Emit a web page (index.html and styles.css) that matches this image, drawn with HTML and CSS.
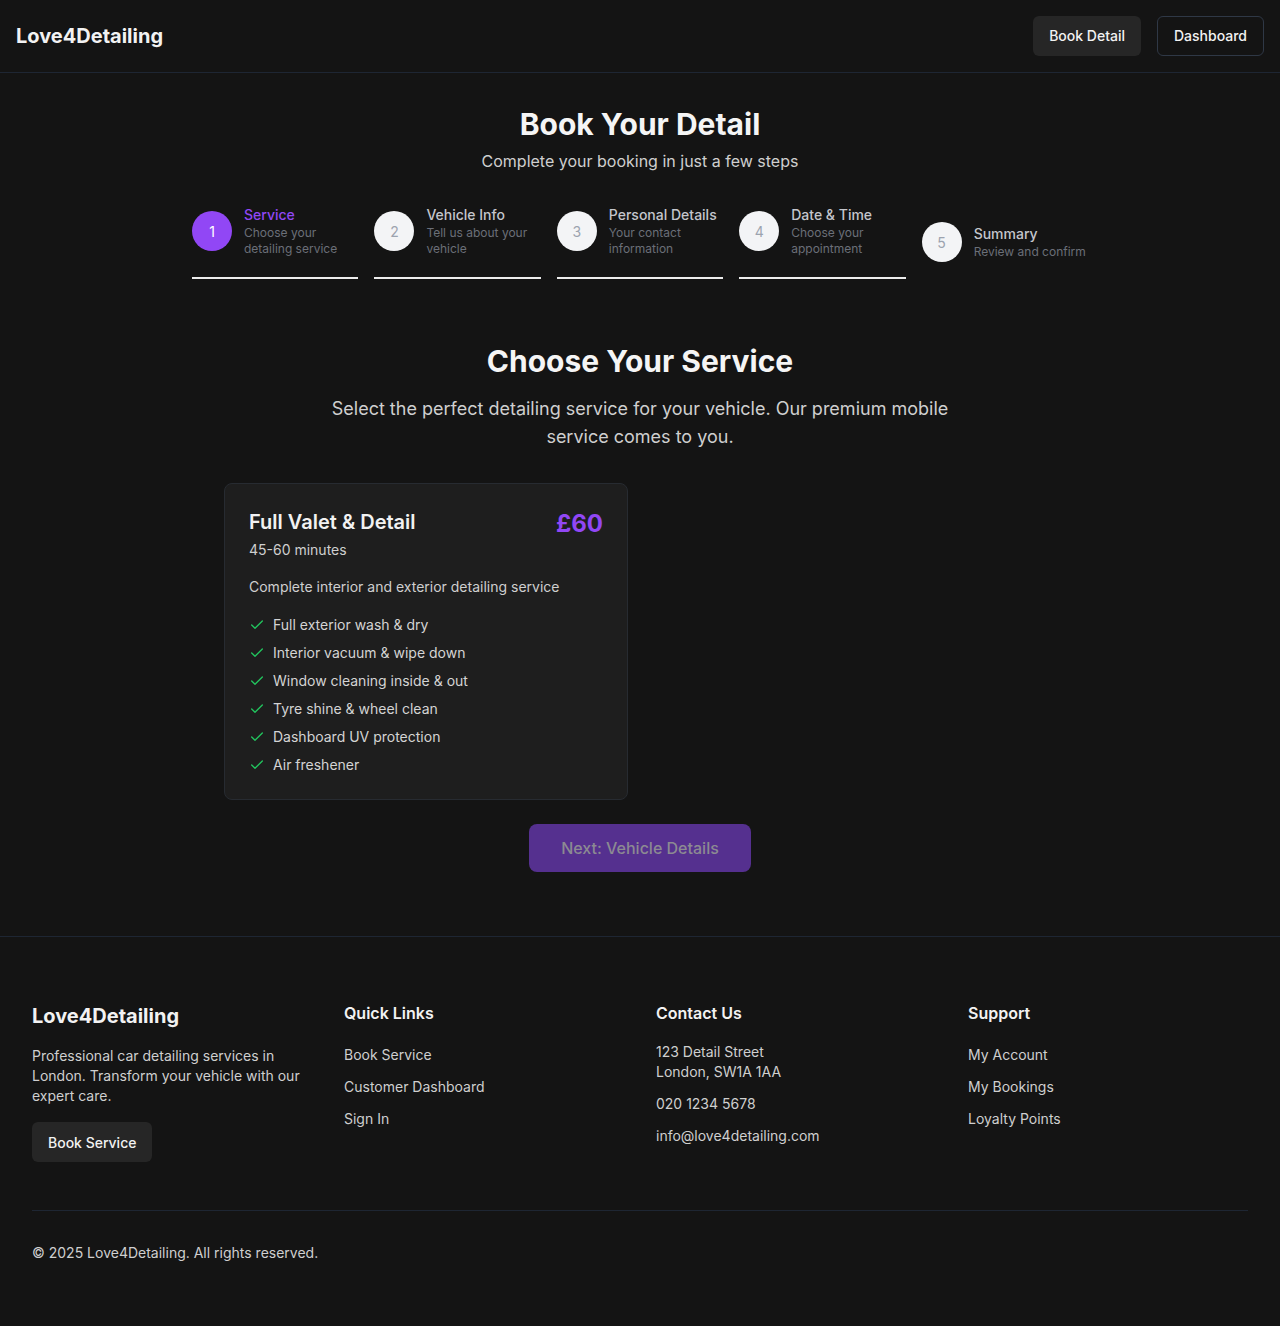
FILE: index.html
```html
<!DOCTYPE html>
<html lang="en">
<head>
<meta charset="utf-8">
<title>Love4Detailing - Book Your Detail</title>
<link rel="stylesheet" href="styles.css">
</head>
<body>
<header class="topbar">
  <div class="logo">Love4Detailing</div>
  <nav class="top-actions">
    <a class="btn btn-solid" href="#">Book Detail</a>
    <a class="btn btn-outline" href="#">Dashboard</a>
  </nav>
</header>

<main class="main">
  <h1 class="page-title">Book Your Detail</h1>
  <p class="page-sub">Complete your booking in just a few steps</p>

  <ol class="stepper">
    <li class="step active">
      <div class="step-row">
        <span class="step-num">1</span>
        <div class="step-text">
          <div class="step-title">Service</div>
          <div class="step-desc">Choose your detailing service</div>
        </div>
      </div>
      <div class="step-bar"></div>
    </li>
    <li class="step">
      <div class="step-row">
        <span class="step-num">2</span>
        <div class="step-text">
          <div class="step-title">Vehicle Info</div>
          <div class="step-desc">Tell us about your vehicle</div>
        </div>
      </div>
      <div class="step-bar"></div>
    </li>
    <li class="step">
      <div class="step-row">
        <span class="step-num">3</span>
        <div class="step-text">
          <div class="step-title">Personal Details</div>
          <div class="step-desc">Your contact information</div>
        </div>
      </div>
      <div class="step-bar"></div>
    </li>
    <li class="step">
      <div class="step-row">
        <span class="step-num">4</span>
        <div class="step-text">
          <div class="step-title">Date &amp; Time</div>
          <div class="step-desc">Choose your appointment</div>
        </div>
      </div>
      <div class="step-bar"></div>
    </li>
    <li class="step">
      <div class="step-row">
        <span class="step-num">5</span>
        <div class="step-text">
          <div class="step-title">Summary</div>
          <div class="step-desc">Review and confirm</div>
        </div>
      </div>
    </li>
  </ol>

  <section class="service-section">
    <h2 class="section-title">Choose Your Service</h2>
    <p class="section-sub">Select the perfect detailing service for your vehicle. Our premium mobile service comes to you.</p>

    <div class="service-grid">
      <div class="service-card">
        <div class="card-head">
          <div>
            <h3 class="card-title">Full Valet &amp; Detail</h3>
            <div class="card-duration">45-60 minutes</div>
          </div>
          <div class="card-price">£60</div>
        </div>
        <p class="card-desc">Complete interior and exterior detailing service</p>
        <ul class="features">
          <li><svg viewBox="0 0 24 24" class="check"><path d="M20 6 9 17l-5-5"/></svg>Full exterior wash &amp; dry</li>
          <li><svg viewBox="0 0 24 24" class="check"><path d="M20 6 9 17l-5-5"/></svg>Interior vacuum &amp; wipe down</li>
          <li><svg viewBox="0 0 24 24" class="check"><path d="M20 6 9 17l-5-5"/></svg>Window cleaning inside &amp; out</li>
          <li><svg viewBox="0 0 24 24" class="check"><path d="M20 6 9 17l-5-5"/></svg>Tyre shine &amp; wheel clean</li>
          <li><svg viewBox="0 0 24 24" class="check"><path d="M20 6 9 17l-5-5"/></svg>Dashboard UV protection</li>
          <li><svg viewBox="0 0 24 24" class="check"><path d="M20 6 9 17l-5-5"/></svg>Air freshener</li>
        </ul>
      </div>
    </div>

    <div class="next-wrap">
      <button class="next-btn" disabled>Next: Vehicle Details</button>
    </div>
  </section>
</main>

<footer class="footer">
  <div class="footer-grid">
    <div class="fcol">
      <div class="f-logo">Love4Detailing</div>
      <p class="f-about">Professional car detailing services in London. Transform your vehicle with our expert care.</p>
      <a class="btn btn-solid f-btn" href="#">Book Service</a>
    </div>
    <div class="fcol">
      <h4 class="f-head">Quick Links</h4>
      <ul class="f-links">
        <li>Book Service</li>
        <li>Customer Dashboard</li>
        <li>Sign In</li>
      </ul>
    </div>
    <div class="fcol">
      <h4 class="f-head">Contact Us</h4>
      <div class="f-contact">
        <p>123 Detail Street<br>London, SW1A 1AA</p>
        <p>020 1234 5678</p>
        <p>info@love4detailing.com</p>
      </div>
    </div>
    <div class="fcol">
      <h4 class="f-head">Support</h4>
      <ul class="f-links">
        <li>My Account</li>
        <li>My Bookings</li>
        <li>Loyalty Points</li>
      </ul>
    </div>
  </div>
  <div class="f-bottom">© 2025 Love4Detailing. All rights reserved.</div>
</footer>
</body>
</html>
```

FILE: styles.css
```css
* { box-sizing: border-box; }
html, body { margin: 0; padding: 0; }
body {
  background: #141414;
  color: #f2f2f2;
  font-family: Inter, "Noto Sans", "Liberation Sans", sans-serif;
}
a { text-decoration: none; color: inherit; }
h1, h2, h3, h4, p, ul, ol { margin: 0; padding: 0; }
ul, ol { list-style: none; }

.topbar {
  height: 73px;
  border-bottom: 1px solid #1e2633;
  display: flex;
  align-items: center;
  justify-content: space-between;
  padding: 0 16px 1px;
}
.logo { font-size: 20px; font-weight: 700; line-height: 28px; color: #f2f2f2; }
.top-actions { display: flex; gap: 16px; }
.btn {
  display: inline-flex;
  align-items: center;
  height: 40px;
  padding: 0 16px;
  border-radius: 6px;
  font-size: 14px;
  font-weight: 500;
  color: #f2f2f2;
}
.btn-solid { background: #262626; }
.btn-outline { border: 1px solid #2f3846; background: #141414; }

.main { padding: 33px 0 64px; }
.page-title { text-align: center; font-size: 30px; line-height: 36px; font-weight: 700; color: #f5f5f5; }
.page-sub { text-align: center; font-size: 16px; line-height: 24px; color: #cfcfcf; margin-top: 7px; }

.stepper {
  width: 896px;
  margin: 32px auto 0;
  display: flex;
  align-items: center;
  gap: 16px;
}
.step { flex: 1 1 0; min-width: 0; }
.step-row { display: flex; align-items: center; gap: 12px; }
.step-num {
  flex: none;
  width: 40px; height: 40px;
  border-radius: 50%;
  background: #f3f4f6;
  color: #9ca3af;
  display: flex; align-items: center; justify-content: center;
  font-size: 14px;
}
.step.active .step-num { background: #9147f5; color: #ffffff; }
.step-title { font-size: 14px; line-height: 20px; font-weight: 500; color: #c4c6cc; }
.step.active .step-title { color: #9147f5; }
.step-desc { font-size: 12px; line-height: 16px; color: #6b6f78; }
.step-bar { height: 2px; background: #ececec; margin-top: 20px; }

.service-section { margin-top: 64px; }
.section-title { text-align: center; font-size: 30px; line-height: 36px; font-weight: 700; color: #f5f5f5; }
.section-sub {
  max-width: 640px;
  margin: 16px auto 0;
  text-align: center;
  font-size: 18px;
  line-height: 28px;
  color: #cfcfcf;
}
.service-grid {
  width: 832px;
  margin: 32px auto 0;
  display: grid;
  grid-template-columns: 1fr 1fr;
  gap: 24px;
}
.service-card {
  background: #1e1e1e;
  border: 1px solid #272b31;
  border-radius: 8px;
  padding: 24px;
}
.card-head { display: flex; justify-content: space-between; align-items: flex-start; }
.card-title { font-size: 20px; line-height: 28px; font-weight: 600; color: #f2f2f2; }
.card-duration { font-size: 14px; line-height: 20px; color: #cfcfcf; margin-top: 4px; }
.card-price { font-size: 24px; line-height: 32px; font-weight: 700; color: #9147f5; }
.card-desc { font-size: 14px; line-height: 20px; color: #cfcfcf; margin-top: 17px; }
.features { margin-top: 18px; display: flex; flex-direction: column; gap: 8px; }
.features li { display: flex; align-items: center; gap: 8px; font-size: 14px; line-height: 20px; color: #d4d4d4; }
.check { width: 16px; height: 16px; flex: none; fill: none; stroke: #22c55e; stroke-width: 2; stroke-linecap: round; stroke-linejoin: round; }

.next-wrap { display: flex; justify-content: center; margin-top: 24px; }
.next-btn {
  height: 48px;
  padding: 0 32px;
  border: none;
  border-radius: 8px;
  background: #55308f;
  color: #8c8a92;
  font-family: inherit;
  font-size: 16px;
  font-weight: 500;
}

.footer { border-top: 1px solid #1e2633; padding: 64px 32px 63px; }
.footer-grid { display: grid; grid-template-columns: repeat(4, 1fr); gap: 32px; }
.f-logo { font-size: 20px; line-height: 28px; font-weight: 700; color: #f2f2f2; margin-top: 1px; }
.f-about { margin-top: 16px; font-size: 14px; line-height: 20px; color: #cfcfcf; }
.f-btn { margin-top: 16px; }
.f-head { font-size: 16px; line-height: 24px; font-weight: 600; color: #f2f2f2; }
.f-links { margin-top: 20px; display: flex; flex-direction: column; gap: 12px; }
.f-links li { font-size: 14px; line-height: 20px; color: #cfcfcf; }
.f-contact { margin-top: 17px; display: flex; flex-direction: column; gap: 12px; }
.f-contact p { font-size: 14px; line-height: 20px; color: #cfcfcf; }
.f-bottom {
  margin-top: 48px;
  border-top: 1px solid #1e2633;
  padding-top: 32px;
  font-size: 14px;
  line-height: 20px;
  color: #cfcfcf;
}
```
